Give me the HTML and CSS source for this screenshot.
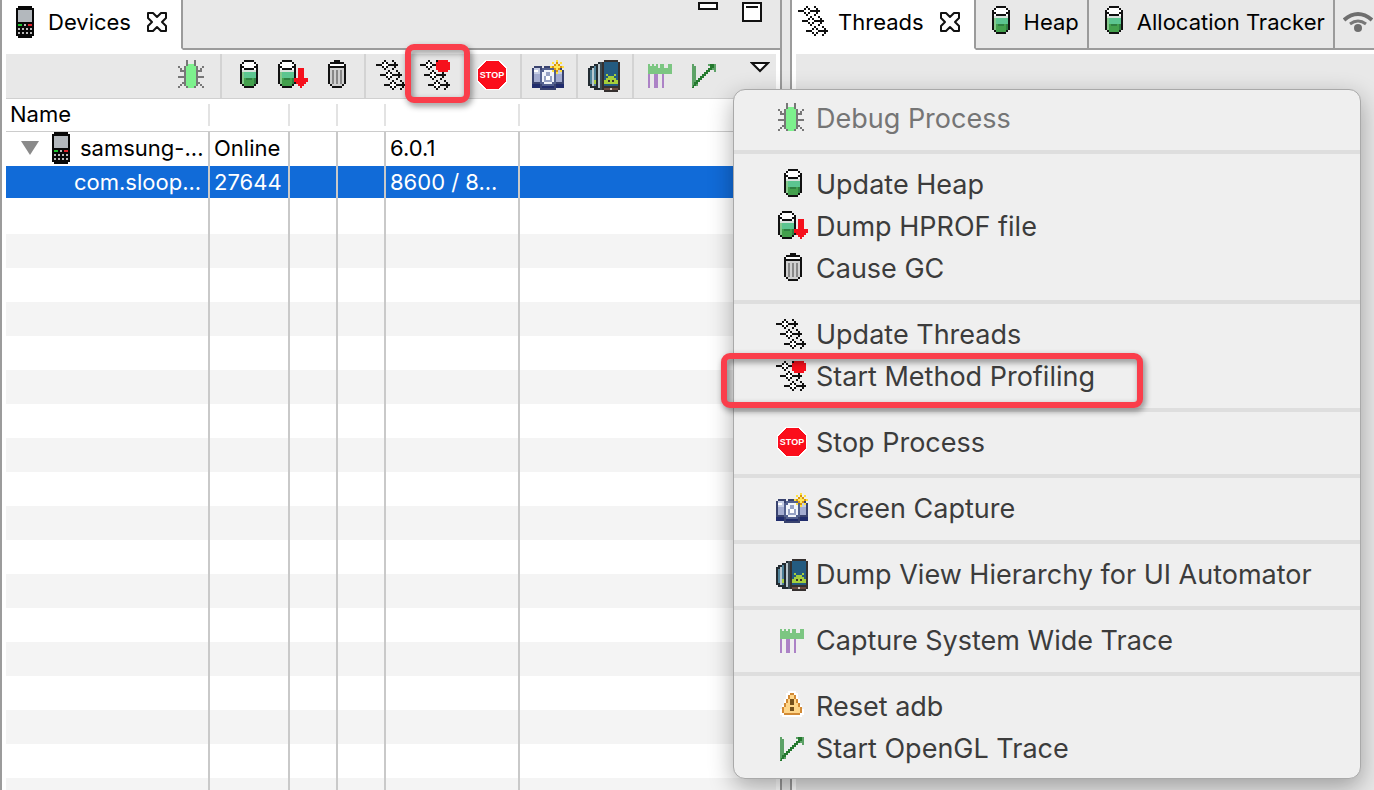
FILE: index.html
```html
<!DOCTYPE html>
<html lang="en">
<head>
<meta charset="utf-8">
<title>Devices</title>
<link rel="stylesheet" href="styles.css">
</head>
<body>
<svg class="sprite" aria-hidden="true">
  <symbol id="bug" viewBox="0 0 16 16">
    <path fill="#777" d="M5 0h1v2h-1zM9 0h1v2h-1zM5 2h5v1h1v10h-1v1h-5v-1h-1v-10h1zM1 3h1v1h-1zM2 4h1v1h1v1h-2zM1 8h3v1h-3zM3 11h1v1h-1zM2 12h1v1h-1zM1 13h1v1h-1zM13 3h1v1h-1zM11 5h1v-1h1v2h-2zM11 8h3v1h-3zM11 11h1v1h-1zM12 12h1v1h-1zM13 13h1v1h-1z"/>
    <path fill="#7df18d" d="M6 2h3v1h1v10h-1v1h-3v-1h-1v-10h1z"/>
  </symbol>
  <symbol id="tank" viewBox="0 0 16 16">
    <g id="tank-body">
      <path fill="#fff" d="M5 1h7v12h-7z"/>
      <path fill="#d8e2dc" d="M5 5h7v1h-7z"/>
      <path fill="#5cc590" d="M5 6h7v3h-7z"/>
      <path fill="#43a04c" d="M5 9h7v4h-7z"/>
      <path fill="#86c98c" d="M5 6h1v6h-1z"/>
      <path fill="#2f7f42" d="M7 9h3v1h-3zM11 9h1v3h-1z"/>
      <path fill="#111" d="M6 0h5v1h-5zM5 1h1v1h-1zM11 1h1v1h-1zM4 2h1v10h-1zM12 2h1v10h-1zM5 3h1v1h-1zM11 3h1v1h-1zM6 4h5v1h-5zM5 12h1v1h-1zM11 12h1v1h-1zM6 13h5v1h-5z"/>
    </g>
  </symbol>
  <symbol id="dump" viewBox="0 0 16 16">
    <use href="#tank-body" transform="translate(-3 0)"/>
    <path fill="#f5101c" d="M11 4h3v5h2v2h-1v1h-1v1h-1v1h-1v-1h-1v-1h-1v-1h-1v-2h2z"/>
  </symbol>
  <symbol id="trash" viewBox="0 0 16 16">
    <path fill="#d0d0d0" d="M5 3h7v10h-7z"/>
    <path fill="#fff" d="M5 2h7v1h-7z"/>
    <path fill="#888" d="M6 5h1v7h-1zM8 5h1v7h-1zM10 5h1v7h-1z"/>
    <path fill="#111" d="M7 0h3v1h2v1h-7v-1h2zM4 2h1v10h-1zM12 2h1v10h-1zM5 3h7v1h-7zM5 12h1v1h-1zM11 12h1v1h-1zM6 13h5v1h-5z"/>
  </symbol>
  <symbol id="threads" viewBox="0 0 16 16">
    <g id="thread-arrows">
      <g id="thread-arrow">
        <path fill="#fff" d="M3 2h3v1h-3zM4 1h1v3h-1z"/>
        <path fill="#111" d="M0 2h3v1h-3zM4 0h1v1h-1zM3 1h1v1h-1zM5 1h1v1h-1zM6 2h5v1h-5zM3 3h1v1h-1zM5 3h1v1h-1zM4 4h1v1h-1zM8 0h1v1h-1zM9 1h1v3h-1zM8 4h1v1h-1z"/>
      </g>
      <use href="#thread-arrow" transform="translate(2 5)"/>
      <use href="#thread-arrow" transform="translate(4 10)"/>
    </g>
  </symbol>
  <symbol id="profile" viewBox="0 0 16 16">
    <use href="#thread-arrows"/>
    <path fill="#f5101c" d="M9 0h5v1h1v4h-1v1h-5v-1h-1v-4h1z"/>
  </symbol>
  <symbol id="stop" viewBox="0 0 32 32">
    <path fill="#fff" d="M9 0h14l8 8v14l-8 8h-14l-8-8v-14z"/>
    <path fill="#fb0d1b" d="M10 1h12l8 8v12l-8 8h-12l-8-8v-12z"/>
  </symbol>
  <symbol id="camera" viewBox="0 0 16 16">
    <path fill="#39436f" d="M1 3h4v1h1v-1h5v1h4v1h1v9h-4v1h-8v-1h-4v-10h1z"/>
    <path fill="#c5cde4" d="M1 4h3v1h2v-1h4v1h5v3h-14z"/>
    <path fill="#a3acd0" d="M1 7h3v4h-3zM12 7h3v4h-3z"/>
    <path fill="#202c6c" d="M0 12h4v2h-4zM12 12h4v2h-4zM5 13h6v1h-6z"/>
    <path fill="#53618f" d="M5 4h6v1h1v7h-1v1h-6v-1h-1v-7h1z"/>
    <path fill="#f1f4fb" d="M6 5h4v1h1v5h-1v1h-4v-1h-1v-5h1z"/>
    <path fill="#97a3c5" d="M7 6h2v2h1v3h-4v-3h1z"/>
    <path fill="#fff" d="M7 8h2v2h-2zM1 5h2v1h-2z"/>
    <path fill="#ffe13c" d="M12 0h1v2h1v-1h1v1h-1v1h2v1h-2v1h1v1h-1v-1h-1v2h-1v-2h-1v1h-1v-1h1v-1h-2v-1h2v-1h-1v-1h1v1h1z"/>
    <path fill="#d8940f" d="M12 1h1v1h1v1h1v1h-1v1h-1v1h-1v-1h-1v-1h-1v-1h1v-1h1z"/>
    <path fill="#ffe85b" d="M12 2h1v1h1v1h-1v1h-1v-1h-1v-1h1z"/>
  </symbol>
  <symbol id="phones" viewBox="0 0 16 16">
    <path fill="#222b31" d="M1 3h2v11h-2v-1h-1v-9h1zM3 2h3v13h-3zM5 1h3v14h-3z"/>
    <path fill="#4e8198" d="M1 5h1v7h-1zM3 3h1v10h-1z"/>
    <path fill="#b9c8cf" d="M2 4h1v9h-1zM5 2h1v12h-1z"/>
    <path fill="#3a4a52" d="M6 1h1v14h-1z"/>
    <path fill="#35302f" d="M8 0h7v1h1v14h-1v1h-7v-1h-1v-14h1z"/>
    <path fill="#245b80" d="M8 1h7v12h-7z"/>
    <path fill="#a6cf3b" d="M8 12v-2h1v-1h1v-1h-1v-1h1v1h3v-1h1v1h-1v1h1v1h1v2zM3 10h1v2h-1z"/>
    <path fill="#35302f" d="M10 10h1v1h-1zM12 10h1v1h-1z"/>
    <path fill="#6d4a40" d="M8 14h7v1h-7z"/>
    <path fill="#d5c8c2" d="M11 14h1v1h-1z"/>
  </symbol>
  <symbol id="trace" viewBox="0 0 16 16">
    <path fill="#ac82c6" d="M2 7h1v7h-1zM5 7h2v7h-2zM9 7h1v7h-1z"/>
    <path fill="#7cc682" d="M2 2h1v1h1v-1h1v1h1v-1h1v2h1v-2h2v2h2v-2h2v5h-12z"/>
  </symbol>
  <symbol id="opengl" viewBox="0 0 16 16">
    <path fill="#5da267" d="M2 2h1v1h1v8h1v2h-2v1h-1z"/>
    <path fill="#5da267" d="M10 2h4v4h-1v-1h-1v-1h-1v-1h-1z"/>
    <path fill="#24792e" d="M3 12v-1h1v-1h1v-1h1v-1h1v-1h1v-1h1v-1h1v-1h1v-2h2v2h-1v1h-1v1h-1v1h-1v1h-1v1h-1v1h-1v1h-1v1h-1v1h-1v1h-1z"/>
  </symbol>
  <symbol id="warn" viewBox="0 0 16 16">
    <path fill="#fff" d="M6 0h4v1h1v3h1v3h1v2h1v3h-1v1h-10v-1h-1v-3h1v-2h1v-3h1v-3h1z"/>
    <path fill="#d28a35" d="M7 1h2v1h1v2h1v2h1v2h1v3h-1v1h-8v-1h-1v-3h1v-2h1v-2h1v-2h1z"/>
    <path fill="#ffd689" d="M7 2h2v2h1v2h1v2h1v3h-8v-3h1v-2h1v-2h1z"/>
    <path fill="#75501c" d="M7 4h2v3h-2zM7 8h2v2h-2z"/>
  </symbol>
  <symbol id="device" viewBox="0 0 16 16">
    <path fill="#080808" d="M5 0h7v1h1v14h-1v1h-7v-1h-1v-14h1z"/>
    <path fill="#b3b8bd" d="M5 2h7v6h-7z"/>
    <path fill="#1bc42c" d="M5 9h2v1h-2z"/>
    <path fill="#e0222b" d="M10 9h2v1h-2z"/>
    <path fill="#bbb" d="M8 9h1v1h-1zM5 11h1v1h-1zM7 11h1v1h-1zM9 11h1v1h-1zM11 11h1v1h-1zM5 13h1v1h-1zM7 13h1v1h-1zM9 13h1v1h-1zM11 13h1v1h-1z"/>
  </symbol>
  <symbol id="close" viewBox="0 0 20 20">
    <path fill="#fff" stroke="#111" stroke-width="2" stroke-linejoin="round" d="M1 1h5l4 4 4-4h5v5l-4 4 4 4v5h-5l-4-4-4 4h-5v-5l4-4-4-4z"/>
  </symbol>
</svg>

<main class="workbench">
  <section class="pane devices">
    <header class="tabs">
      <button class="tab active"><svg class="icon"><use href="#device"/></svg>Devices<svg class="close"><use href="#close"/></svg></button>
      <div class="tab-rest">
        <button class="window-button" aria-label="Minimize"><svg width="20" height="20"><path class="window-line" d="M1 1h18v6h-18z"/></svg></button>
        <button class="window-button" aria-label="Maximize"><svg width="20" height="20"><path class="window-line" d="M1 1h18v18h-18zM4 5h12"/></svg></button>
      </div>
    </header>
    <div class="toolbar">
      <button class="tool" aria-label="Debug Process"><svg class="icon"><use href="#bug"/></svg></button>
      <span class="divider"></span>
      <button class="tool" aria-label="Update Heap"><svg class="icon"><use href="#tank"/></svg></button>
      <button class="tool" aria-label="Dump HPROF file"><svg class="icon"><use href="#dump"/></svg></button>
      <button class="tool" aria-label="Cause GC"><svg class="icon"><use href="#trash"/></svg></button>
      <span class="divider"></span>
      <button class="tool" aria-label="Update Threads"><svg class="icon"><use href="#threads"/></svg></button>
      <button class="tool" aria-label="Start Method Profiling"><svg class="icon"><use href="#profile"/></svg><span class="marker marker-tool"></span></button>
      <span class="divider"></span>
      <button class="tool" aria-label="Stop Process"><svg class="icon" viewBox="0 0 32 32"><use href="#stop"/><text class="stop-word" x="16" y="18" text-anchor="middle">STOP</text></svg></button>
      <span class="divider"></span>
      <button class="tool" aria-label="Screen Capture"><svg class="icon"><use href="#camera"/></svg></button>
      <span class="divider"></span>
      <button class="tool" aria-label="Dump View Hierarchy"><svg class="icon"><use href="#phones"/></svg></button>
      <span class="divider"></span>
      <button class="tool" aria-label="Capture System Wide Trace"><svg class="icon"><use href="#trace"/></svg></button>
      <button class="tool" aria-label="Start OpenGL Trace"><svg class="icon"><use href="#opengl"/></svg></button>
      <button class="view-menu" aria-label="View Menu"><svg width="20" height="12"><path fill="#fff" stroke="#111" stroke-width="2" d="M2 1h16l-8 8z"/></svg></button>
    </div>
    <div class="table-area">
      <table class="device-table">
        <colgroup><col class="col-name"><col class="col-state"><col class="col-flag"><col class="col-flag"><col class="col-port"><col></colgroup>
        <thead>
          <tr><th><div>Name</div></th><th><div></div></th><th><div></div></th><th><div></div></th><th><div></div></th><th></th></tr>
        </thead>
        <tbody>
          <tr><td><div class="tree"><svg class="twisty" viewBox="0 0 18 14"><path fill="#8a8a8a" d="M0 0h18l-9 14z"/></svg><svg class="icon"><use href="#device"/></svg>samsung-...</div></td><td>Online</td><td></td><td></td><td>6.0.1</td><td></td></tr>
          <tr class="selected"><td class="child">com.sloop...</td><td>27644</td><td></td><td></td><td>8600 / 8...</td><td></td></tr>
          <tr><td></td><td></td><td></td><td></td><td></td><td></td></tr>
          <tr><td></td><td></td><td></td><td></td><td></td><td></td></tr>
          <tr><td></td><td></td><td></td><td></td><td></td><td></td></tr>
          <tr><td></td><td></td><td></td><td></td><td></td><td></td></tr>
          <tr><td></td><td></td><td></td><td></td><td></td><td></td></tr>
          <tr><td></td><td></td><td></td><td></td><td></td><td></td></tr>
          <tr><td></td><td></td><td></td><td></td><td></td><td></td></tr>
          <tr><td></td><td></td><td></td><td></td><td></td><td></td></tr>
          <tr><td></td><td></td><td></td><td></td><td></td><td></td></tr>
          <tr><td></td><td></td><td></td><td></td><td></td><td></td></tr>
          <tr><td></td><td></td><td></td><td></td><td></td><td></td></tr>
          <tr><td></td><td></td><td></td><td></td><td></td><td></td></tr>
          <tr><td></td><td></td><td></td><td></td><td></td><td></td></tr>
          <tr><td></td><td></td><td></td><td></td><td></td><td></td></tr>
          <tr><td></td><td></td><td></td><td></td><td></td><td></td></tr>
          <tr><td></td><td></td><td></td><td></td><td></td><td></td></tr>
          <tr><td></td><td></td><td></td><td></td><td></td><td></td></tr>
          <tr><td></td><td></td><td></td><td></td><td></td><td></td></tr>
        </tbody>
      </table>
    </div>
  </section>

  <section class="pane details">
    <header class="tabs">
      <button class="tab active"><svg class="icon"><use href="#threads"/></svg>Threads<svg class="close"><use href="#close"/></svg></button>
      <button class="tab"><svg class="icon"><use href="#tank"/></svg>Heap</button>
      <button class="tab"><svg class="icon"><use href="#tank"/></svg>Allocation Tracker</button>
      <button class="tab network" aria-label="Network Statistics"><svg width="30" height="22" viewBox="0 0 30 22"><path fill="none" stroke="#6e6e6e" stroke-width="4" d="M1 9q14-12 28 0"/><path fill="none" stroke="#777" stroke-width="3" d="M7 13q8-6 16 0"/><circle cx="15" cy="17" r="4" fill="#6e6e6e"/></svg></button>
    </header>
    <div class="details-body"></div>
  </section>
</main>

<nav class="menu">
  <button class="item disabled"><svg class="icon"><use href="#bug"/></svg>Debug Process</button>
  <hr>
  <button class="item"><svg class="icon"><use href="#tank"/></svg>Update Heap</button>
  <button class="item"><svg class="icon"><use href="#dump"/></svg>Dump HPROF file</button>
  <button class="item"><svg class="icon"><use href="#trash"/></svg>Cause GC</button>
  <hr>
  <button class="item"><svg class="icon"><use href="#threads"/></svg>Update Threads</button>
  <button class="item"><svg class="icon"><use href="#profile"/></svg>Start Method Profiling<span class="marker marker-item"></span></button>
  <hr>
  <button class="item"><svg class="icon" viewBox="0 0 32 32"><use href="#stop"/><text class="stop-word" x="16" y="18" text-anchor="middle">STOP</text></svg>Stop Process</button>
  <hr>
  <button class="item"><svg class="icon"><use href="#camera"/></svg>Screen Capture</button>
  <hr>
  <button class="item"><svg class="icon"><use href="#phones"/></svg>Dump View Hierarchy for UI Automator</button>
  <hr>
  <button class="item"><svg class="icon"><use href="#trace"/></svg>Capture System Wide Trace</button>
  <hr>
  <button class="item"><svg class="icon"><use href="#warn"/></svg>Reset adb</button>
  <button class="item"><svg class="icon"><use href="#opengl"/></svg>Start OpenGL Trace</button>
</nav>
</body>
</html>
```
FILE: styles.css
```css
* { box-sizing: border-box; }

body {
  margin: 0;
  height: 100vh;
  overflow: hidden;
  background: #e8e8e8;
  color: #000;
  font: 22px/28px Inter, "Liberation Sans", sans-serif;
}

button {
  margin: 0;
  padding: 0;
  border: 0;
  background: none;
  color: inherit;
  font: inherit;
  text-align: left;
  white-space: nowrap;
}

svg { display: block; flex: none; }
.sprite { position: absolute; width: 0; height: 0; }
.icon { width: 32px; height: 32px; shape-rendering: crispEdges; }
.close { width: 20px; height: 20px; }
.stop-word { font: bold 9px "Liberation Sans", sans-serif; fill: #fff; }

.workbench {
  display: grid;
  grid-template-columns: 782fr 584fr;
  column-gap: 8px;
  height: 100%;
}

.pane {
  display: flex;
  flex-direction: column;
  min-width: 0;
  min-height: 0;
  border-left: 2px solid #9b9b9b;
  background: #fff;
  overflow: hidden;
}
.devices { border-right: 2px solid #9b9b9b; }

/* Tab strips */
.tabs { display: flex; flex: none; height: 50px; margin-bottom: 4px; }
.tab {
  display: flex;
  flex: none;
  align-items: center;
  padding: 0 8px 4px 8px;
  border-right: 2px solid #9b9b9b;
  border-bottom: 2px solid #9b9b9b;
  background: #e8e8e8;
}
.tab .icon { margin-right: 8px; }
.tab .close { margin-left: 16px; }
.tab.active { padding: 0 14px 4px 6px; border-bottom-color: #fff; background: #fff; }
.tab-rest {
  display: flex;
  flex: 1;
  justify-content: flex-end;
  align-items: flex-start;
  gap: 24px;
  padding: 2px 18px 0 0;
  border-bottom: 2px solid #9b9b9b;
  background: #e8e8e8;
}
.window-line { fill: #fff; stroke: #111; stroke-width: 2; }
.tab.network { flex: 1; padding-left: 8px; border-right: 0; overflow: hidden; }

/* Toolbar */
.toolbar {
  display: flex;
  flex: none;
  align-items: center;
  justify-content: flex-end;
  height: 45px;
  margin: 0 4px;
  padding-right: 6px;
  border-bottom: 1px solid #d0d0d0;
  background: #e8e8e8;
}
.tool { position: relative; padding: 0 6px; }
.divider { width: 2px; height: 44px; margin: 0 4px 0 6px; background: #d3d3d3; }
.view-menu { align-self: flex-start; margin: 8px 0 0 24px; }

/* Device table */
.table-area { flex: 1; min-height: 0; margin: 0 4px; overflow: hidden; }
.device-table { width: 100%; table-layout: fixed; border-collapse: separate; border-spacing: 0; }
.col-name { width: 204px; }
.col-state { width: 80px; }
.col-flag { width: 48px; }
.col-port { width: 134px; }
th { height: 33px; padding: 0; border-bottom: 1px solid #ccc; font-weight: 400; text-align: left; }
th div { height: 22px; padding-left: 4px; border-right: 2px solid #e3e3e3; line-height: 20px; }
td { height: 34px; padding: 0 0 2px 4px; border-right: 2px solid #c9c9c9; white-space: nowrap; overflow: hidden; }
td:last-child { border-right: 0; }
tbody tr:nth-child(even) { background: #f4f4f4; }
tbody tr.selected { background: #fff; color: #fff; }
.selected td { background: linear-gradient(#116bd8, #116bd8) 0 0 / 100% 32px no-repeat; }
.tree { display: flex; align-items: center; }
.twisty { width: 18px; height: 14px; margin: 0 5px 0 11px; }
.tree .icon { margin-right: 4px; }
td.child { padding-left: 68px; }

.details-body { flex: 1; margin-left: 4px; background: #e8e8e8; }

/* Pop-up menu */
.menu {
  position: absolute;
  left: 733px;
  top: 89px;
  display: flex;
  flex-direction: column;
  padding: 8px 0;
  width: 628px;
  border: 1px solid #a9a9a9;
  border-radius: 12px;
  background: #efefef;
  box-shadow: 0 8px 24px rgba(0, 0, 0, .32);
  color: #3c3c3c;
  font-size: 27px;
}
.item { position: relative; display: flex; align-items: center; gap: 8px; height: 42px; padding-left: 42px; }
.disabled { color: #757575; }
.menu hr { width: 100%; height: 4px; margin: 10px 0; border: 0; background: #dedede; }

/* Highlight frames */
.marker {
  position: absolute;
  border: 6px solid #fa3e4b;
  border-radius: 9px;
  filter: drop-shadow(2px 3px 3px rgba(0, 0, 0, .45));
  z-index: 2;
}
.marker-tool { inset: -16px -12px -11px -9px; }
.marker-item { left: -13px; top: -3px; width: 422px; height: 55px; }
```
